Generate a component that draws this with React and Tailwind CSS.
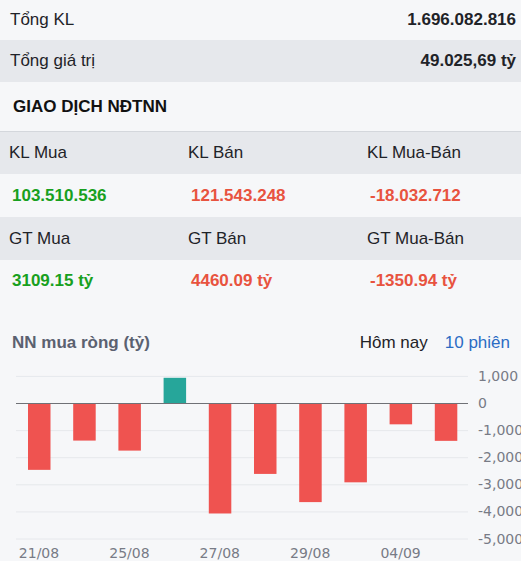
import React from 'react';

const bars = [-2430, -1350, -1720, 930, -4040, -2580, -3620, -2890, -750, -1360];
const ticks = [1000, 0, -1000, -2000, -3000, -4000, -5000];
const dates = [
  { label: '21/08', i: 0 },
  { label: '25/08', i: 2 },
  { label: '27/08', i: 4 },
  { label: '29/08', i: 6 },
  { label: '04/09', i: 8 },
];

const fmt = (v) => (v === 0 ? '0' : v.toLocaleString('en-US'));

function NetBuyChart() {
  const zeroY = 50;
  const scale = 0.0271;
  const x0 = 16;
  const band = 45.2;
  const y = (v) => zeroY - v * scale;

  return (
    <svg width="521" height="209" className="block" style={{ fontFamily: '"DejaVu Sans", sans-serif' }}>
      {ticks.map((t) => (
        <g key={t}>
          <line
            x1={x0}
            x2={468}
            y1={y(t) + 0.5}
            y2={y(t) + 0.5}
            stroke={t === 0 ? '#6f7176' : '#e6e8ec'}
            strokeWidth="1"
          />
          <text x={478} y={y(t) + 5} fontSize="14" fill="#787b86">
            {fmt(t)}
          </text>
        </g>
      ))}
      {bars.map((v, i) => {
        const left = x0 + i * band + 12;
        const top = v > 0 ? y(v) : zeroY + 1;
        const h = Math.abs(v) * scale;
        return (
          <rect key={i} x={left} y={top} width="22.5" height={h} fill={v > 0 ? '#26a69a' : '#ef5350'} />
        );
      })}
      {dates.map((d) => (
        <text
          key={d.label}
          x={x0 + d.i * band + 23}
          y={205}
          fontSize="14"
          fill="#787b86"
          textAnchor="middle"
        >
          {d.label}
        </text>
      ))}
    </svg>
  );
}

export default function App() {
  return (
    <div
      className="w-[521px] h-[561px] overflow-hidden bg-[#f6f7f9] text-[17px] text-[#1f2328]"
      style={{ fontFamily: '"Liberation Sans", Arial, sans-serif' }}
    >
      <div className="flex items-center justify-between h-[40px] pl-[10px] pr-[5px]">
        <span>Tổng KL</span>
        <span className="font-bold">1.696.082.816</span>
      </div>
      <div className="flex items-center justify-between h-[42px] pl-[10px] pr-[5px] bg-[#e6e8ec]">
        <span>Tổng giá trị</span>
        <span className="font-bold">49.025,69 tỷ</span>
      </div>
      <div className="h-[49px] flex items-center pl-[13px] font-bold text-[#111]">GIAO DỊCH NĐTNN</div>

      <div className="border-t border-[#d4d7dc]">
        <div className="grid grid-cols-[179px_179px_1fr] h-[42px] items-center bg-[#e6e8ec] pl-[9px]">
          <span>KL Mua</span>
          <span>KL Bán</span>
          <span>KL Mua-Bán</span>
        </div>
        <div className="grid grid-cols-[179px_179px_1fr] h-[43px] items-center pl-[12px] font-bold">
          <span className="text-[#18a020]">103.510.536</span>
          <span className="text-[#e8533f]">121.543.248</span>
          <span className="text-[#e8533f]">-18.032.712</span>
        </div>
        <div className="grid grid-cols-[179px_179px_1fr] h-[43px] items-center bg-[#e6e8ec] pl-[9px]">
          <span>GT Mua</span>
          <span>GT Bán</span>
          <span>GT Mua-Bán</span>
        </div>
        <div className="grid grid-cols-[179px_179px_1fr] h-[41px] items-center pl-[12px] font-bold">
          <span className="text-[#18a020]">3109.15 tỷ</span>
          <span className="text-[#e8533f]">4460.09 tỷ</span>
          <span className="text-[#e8533f]">-1350.94 tỷ</span>
        </div>
      </div>

      <div className="flex items-center justify-between h-[52px] pt-[32px] pl-[12px] pr-[11px]">
        <span className="font-bold text-[#5b6170]">NN mua ròng (tỷ)</span>
        <div className="flex items-center gap-[17px]">
          <span className="text-[#1f2328]">Hôm nay</span>
          <span className="text-[#2b6cc4]">10 phiên</span>
        </div>
      </div>
      <NetBuyChart />
    </div>
  );
}
